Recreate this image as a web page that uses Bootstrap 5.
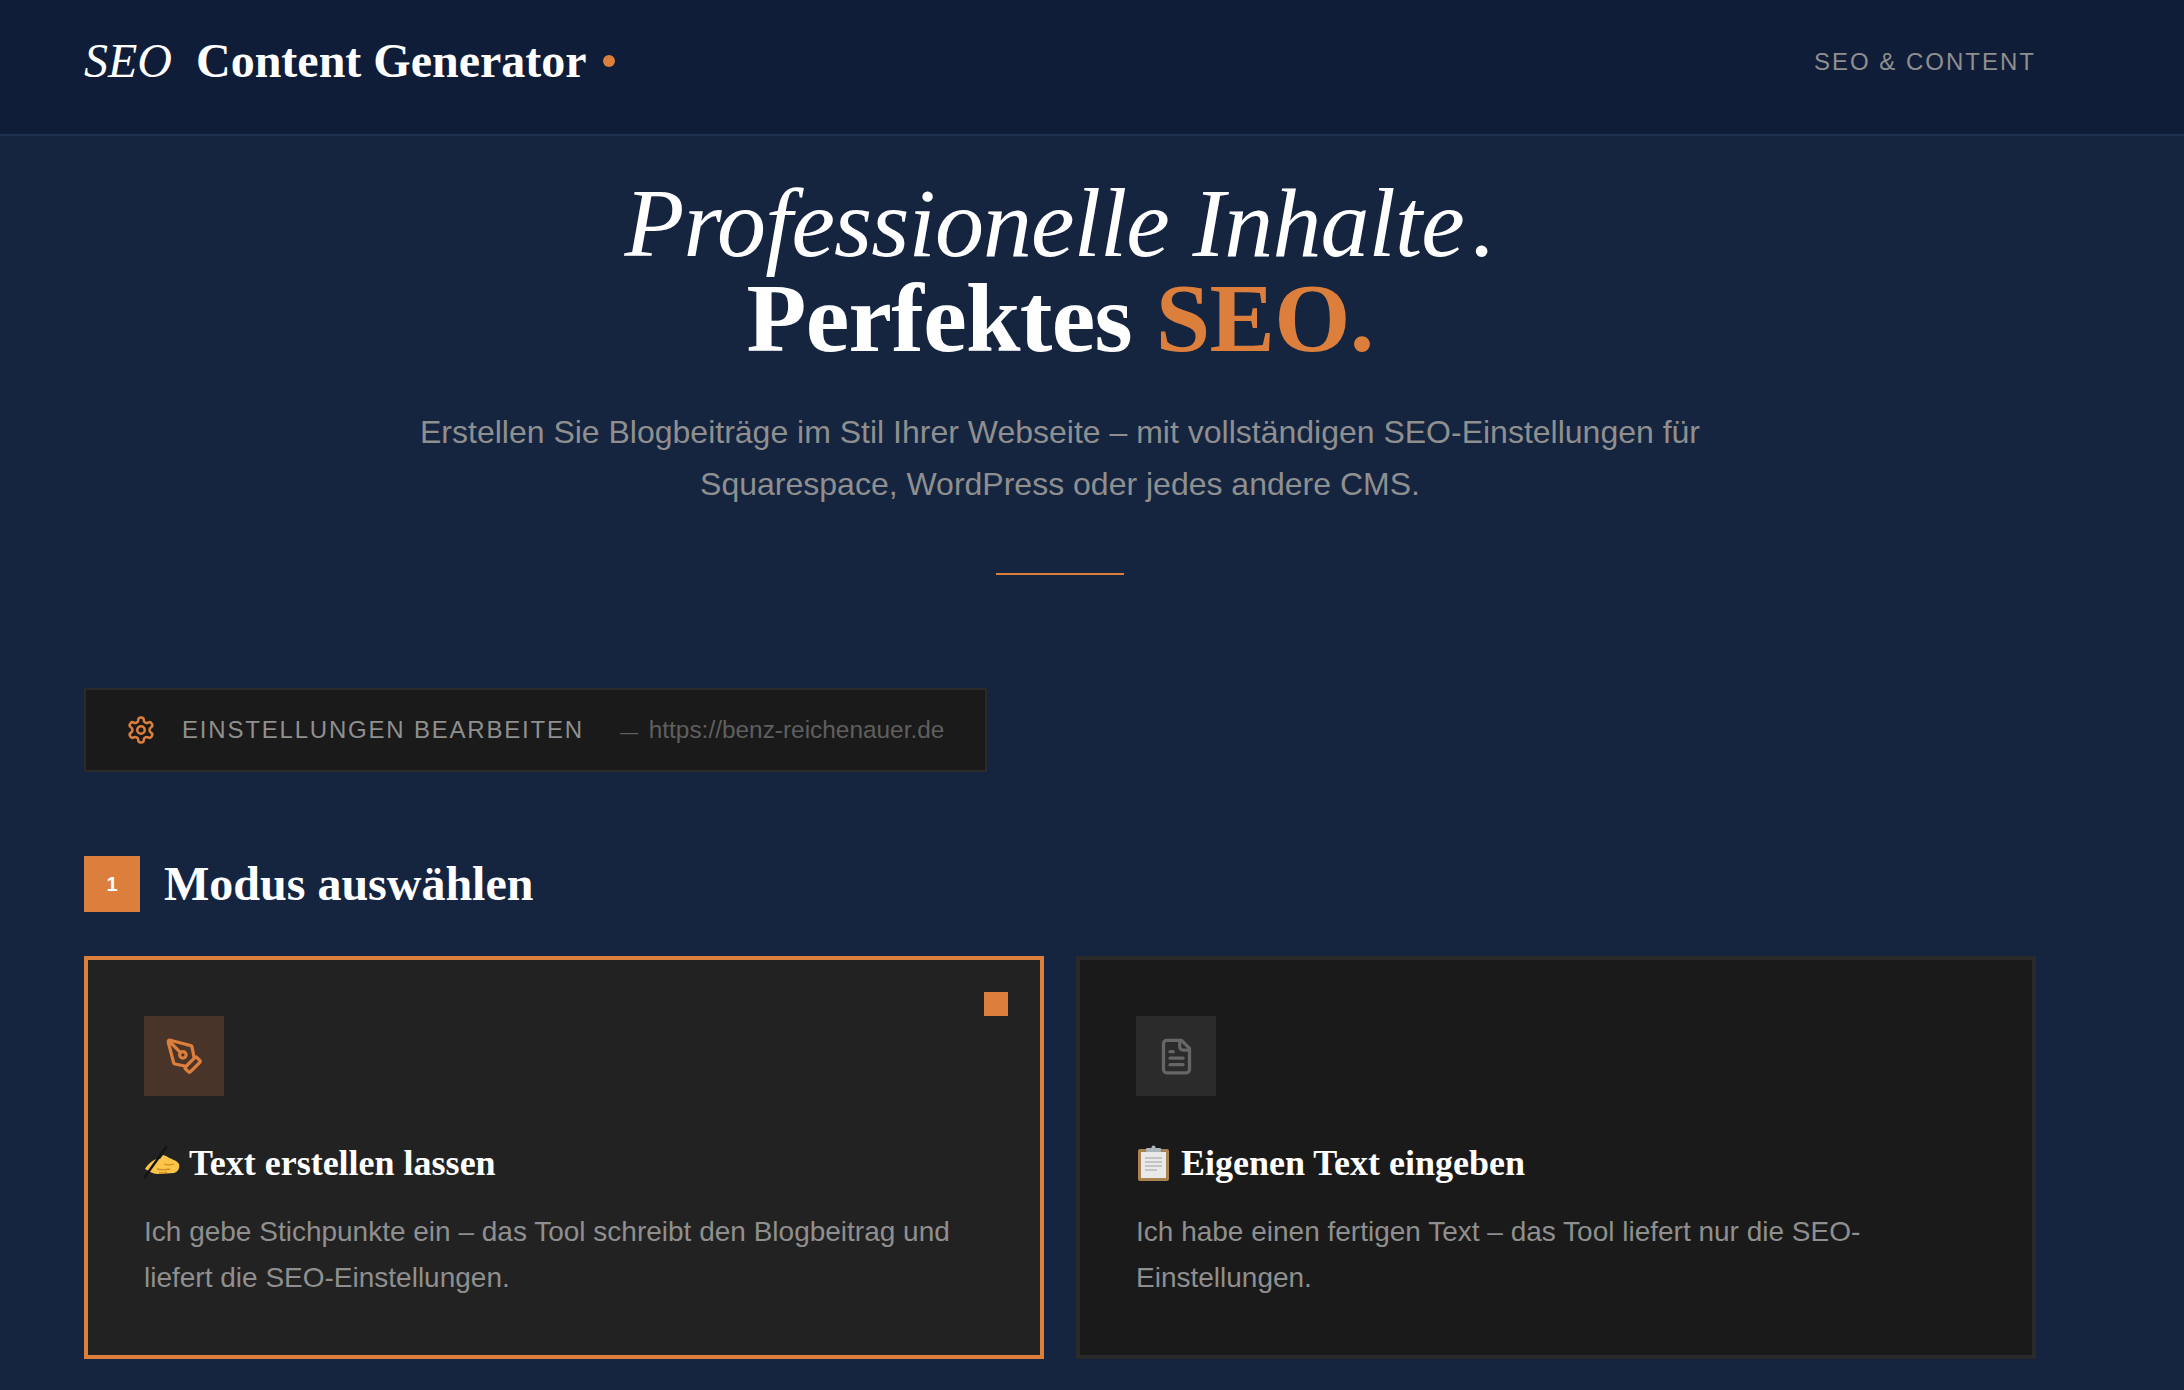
<!DOCTYPE html>
<html lang="de">
<head>
<meta charset="UTF-8">
<title>SEO Content Generator</title>
<link href="https://cdn.jsdelivr.net/npm/bootstrap@5.3.0/dist/css/bootstrap.min.css" rel="stylesheet">
<style>
  body { background: #152540; font-family: "Liberation Sans", Arial, sans-serif; color: #fff; overflow: hidden; }
  .top-head { height: 136px; background: #0f1d38; border-bottom: 2px solid #1e2f50; padding: 0 148px 12px 84px; }
  .brand-name { font-family: "Liberation Serif", serif; font-size: 48px; font-weight: 700; line-height: 1; }
  .brand-name em { font-weight: 400; margin-right: 12px; }
  .brand-dot { width: 12px; height: 12px; background: #dd7f3c; border-radius: 50%; margin-left: 16px; }
  .head-tag { font-size: 24px; letter-spacing: 2px; color: #8f8f8f; margin-top: 2px; }
  .page-main { padding: 0 148px 0 84px; }
  .hero-title { font-family: "Liberation Serif", serif; font-size: 98px; line-height: 95px; letter-spacing: -0.7px; margin: 0; padding-top: 40px; font-weight: 700; }
  .hero-title em { font-weight: 400; letter-spacing: -0.9px; }
  .title-stop { margin-left: 8px; }
  .accent-txt { color: #dd7f3c; }
  .hero-lead { font-size: 32px; line-height: 52px; color: #8f8f8f; width: 1320px; margin: 40px auto 0; }
  .hero-rule { width: 128px; height: 2px; background: #dd7f3c; margin: 63px auto 0; }
  .settings-bar { width: 903px; height: 84px; margin-top: 113px; padding: 0 40px; background: #1a1a1a; border: 2px solid #2a2a2a; white-space: nowrap; }
  .settings-label { font-size: 24px; letter-spacing: 1.8px; color: #8f8f8f; margin-left: 26px; }
  .settings-url { font-size: 24.4px; color: #5f5f5f; margin-left: 36px; }
  .url-dash { font-size: 18px; margin-right: 4px; }
  .step-head { margin-top: 84px; gap: 24px; }
  .step-num { width: 56px; height: 56px; background: #dd7f3c; font-size: 20px; font-weight: 700; }
  .step-title { font-family: "Liberation Serif", serif; font-size: 48px; font-weight: 700; margin: 0; line-height: 1; }
  .mode-grid { display: grid; grid-template-columns: 960px 960px; gap: 32px; margin-top: 44px; }
  .mode-card { position: relative; height: 403px; padding: 56px; background: #1a1a1a; border: 4px solid #2a2a2a; }
  .mode-card.is-active { background: #222; border-color: #dd7f3c; }
  .mode-mark { position: absolute; top: 32px; right: 32px; width: 24px; height: 24px; background: #dd7f3c; }
  .mode-icon { width: 80px; height: 80px; background: #2b2b2b; color: #666; }
  .is-active .mode-icon { background: #483428; color: #dd7f3c; }
  .mode-title { font-family: "Liberation Serif", serif; font-size: 36px; font-weight: 700; line-height: 1; margin: 49px 0 0; gap: 9px; }
  .mode-text { font-size: 28px; line-height: 46px; color: #8f8f8f; margin: 28px 0 0; }
</style>
</head>
<body>
<header class="top-head d-flex align-items-center justify-content-between">
  <div class="d-flex align-items-center">
    <span class="brand-name"><em>SEO</em> Content Generator</span>
    <span class="brand-dot"></span>
  </div>
  <span class="head-tag">SEO &amp; CONTENT</span>
</header>

<main class="page-main">
  <section class="text-center">
    <h1 class="hero-title"><em>Professionelle Inhalte<span class="title-stop">.</span></em><br>Perfektes <span class="accent-txt">SEO.</span></h1>
    <p class="hero-lead">Erstellen Sie Blogbeiträge im Stil Ihrer Webseite – mit vollständigen SEO-Einstellungen für Squarespace, WordPress oder jedes andere CMS.</p>
    <div class="hero-rule"></div>
  </section>

  <div class="settings-bar d-flex align-items-center">
    <svg class="flex-shrink-0" width="30" height="30" viewBox="0 0 24 24" fill="none" stroke="#dd7f3c" stroke-width="2" stroke-linecap="round" stroke-linejoin="round"><path d="M12.22 2h-.44a2 2 0 0 0-2 2v.18a2 2 0 0 1-1 1.73l-.43.25a2 2 0 0 1-2 0l-.15-.08a2 2 0 0 0-2.73.73l-.22.38a2 2 0 0 0 .73 2.73l.15.1a2 2 0 0 1 1 1.72v.51a2 2 0 0 1-1 1.74l-.15.09a2 2 0 0 0-.73 2.73l.22.38a2 2 0 0 0 2.73.73l.15-.08a2 2 0 0 1 2 0l.43.25a2 2 0 0 1 1 1.73V20a2 2 0 0 0 2 2h.44a2 2 0 0 0 2-2v-.18a2 2 0 0 1 1-1.73l.43-.25a2 2 0 0 1 2 0l.15.08a2 2 0 0 0 2.73-.73l.22-.39a2 2 0 0 0-.73-2.73l-.15-.08a2 2 0 0 1-1-1.74v-.5a2 2 0 0 1 1-1.74l.15-.09a2 2 0 0 0 .73-2.73l-.22-.38a2 2 0 0 0-2.73-.73l-.15.08a2 2 0 0 1-2 0l-.43-.25a2 2 0 0 1-1-1.73V4a2 2 0 0 0-2-2z"/><circle cx="12" cy="12" r="3"/></svg>
    <span class="settings-label">EINSTELLUNGEN BEARBEITEN</span>
    <span class="settings-url"><span class="url-dash">—</span> https://benz-reichenauer.de</span>
  </div>

  <div class="step-head d-flex align-items-center">
    <span class="step-num d-flex align-items-center justify-content-center">1</span>
    <h2 class="step-title">Modus auswählen</h2>
  </div>

  <div class="mode-grid">
    <div class="mode-card is-active">
      <span class="mode-mark"></span>
      <div class="mode-icon d-flex align-items-center justify-content-center">
        <svg width="39" height="39" viewBox="0 0 24 24" fill="none" stroke="currentColor" stroke-width="2" stroke-linecap="round" stroke-linejoin="round"><path d="M15.707 21.293a1 1 0 0 1-1.414 0l-1.586-1.586a1 1 0 0 1 0-1.414l5.586-5.586a1 1 0 0 1 1.414 0l1.586 1.586a1 1 0 0 1 0 1.414z"/><path d="m18 13-1.375-6.874a1 1 0 0 0-.746-.776L3.235 2.028a1 1 0 0 0-1.207 1.207L5.35 15.879a1 1 0 0 0 .776.746L13 18"/><path d="m2.3 2.3 7.286 7.286"/><circle cx="11" cy="11" r="2"/></svg>
      </div>
      <h3 class="mode-title d-flex align-items-center">
        <svg width="36" height="36" viewBox="0 0 36 36"><path d="M1 24c4-6 10-11 15-10l3-4 3 1c4 3 11 4 13 8 1 4-1 8-5 9l-16 1c-4 0-8-2-13-5z" fill="#fcc44a"/><path d="M13 24c4 1 9 1 13 0M15 28c3 0 6 0 8-1M20 19c3 1 7 1 10 0" stroke="#d58b1e" stroke-width="1.300" fill="none"/><path d="M23 1 0 33" stroke="#141414" stroke-width="2.400"/></svg>
        <span>Text erstellen lassen</span>
      </h3>
      <p class="mode-text">Ich gebe Stichpunkte ein – das Tool schreibt den Blogbeitrag und liefert die SEO-Einstellungen.</p>
    </div>
    <div class="mode-card">
      <div class="mode-icon d-flex align-items-center justify-content-center">
        <svg width="39" height="39" viewBox="0 0 24 24" fill="none" stroke="currentColor" stroke-width="2" stroke-linecap="round" stroke-linejoin="round"><path d="M15 2H6a2 2 0 0 0-2 2v16a2 2 0 0 0 2 2h12a2 2 0 0 0 2-2V7Z"/><path d="M14 2v4a2 2 0 0 0 2 2h4"/><path d="M10 9H8"/><path d="M16 13H8"/><path d="M16 17H8"/></svg>
      </div>
      <h3 class="mode-title d-flex align-items-center">
        <svg width="36" height="36" viewBox="0 0 36 36"><rect x="2" y="4" width="31" height="32" rx="2" fill="#a9834f"/><rect x="5" y="7" width="25" height="26" fill="#e9e9e9"/><path d="M9 13h17M9 17h17M9 21h17M9 25h12" stroke="#c4c4c4" stroke-width="2"/><rect x="10" y="3" width="15" height="4" rx="1" fill="#aeb4bc"/><circle cx="17.500" cy="2.500" r="2" fill="#aeb4bc"/></svg>
        <span>Eigenen Text eingeben</span>
      </h3>
      <p class="mode-text">Ich habe einen fertigen Text – das Tool liefert nur die SEO-Einstellungen.</p>
    </div>
  </div>
</main>
<script src="https://cdn.jsdelivr.net/npm/bootstrap@5.3.0/dist/js/bootstrap.bundle.min.js"></script>
</body>
</html>
